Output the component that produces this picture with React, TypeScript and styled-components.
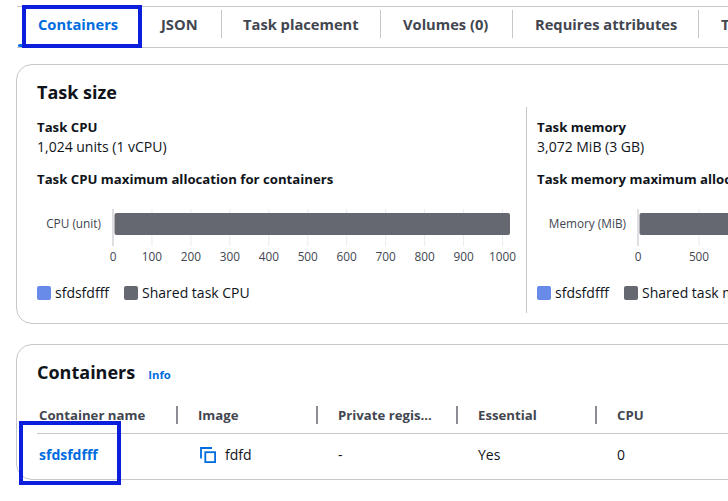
import styled, { createGlobalStyle } from "styled-components";

const GlobalStyle = createGlobalStyle`
  html, body {
    margin: 0;
    padding: 0;
    width: 728px;
    height: 501px;
    overflow: hidden;
    background: #fff;
  }
  body {
    font-family: "Open Sans", "Noto Sans", "Liberation Sans", sans-serif;
    color: #0f141a;
  }
`;

const Page = styled.div`
  position: relative;
  width: 1200px;
  height: 501px;
  padding: 6px 0 0 16px;
  box-sizing: border-box;
`;

const TabBar = styled.div`
  display: flex;
  align-items: center;
  height: 42px;
  box-sizing: border-box;
  border-top: 1px solid #c6c6cd;
  border-bottom: 1px solid #c6c6cd;
  margin-left: 1px;
  margin-bottom: 16px;
`;

const Tab = styled.div<{ $active?: boolean; $plain?: boolean; $width: number; $pad?: number }>`
  flex: none;
  width: ${(p) => p.$width}px;
  height: 28px;
  margin-top: -6px;
  box-sizing: border-box;
  padding-left: ${(p) => p.$pad ?? 22}px;
  border-left: ${(p) => (p.$plain ? "none" : "1px solid #c6c6cd")};
  font-size: 14.7px;
  font-weight: 700;
  line-height: 28px;
  white-space: nowrap;
  color: ${(p) => (p.$active ? "#006ce0" : "#424650")};
`;

const Card = styled.section<{ $height: number }>`
  width: 1150px;
  height: ${(p) => p.$height}px;
  box-sizing: border-box;
  border: 1px solid #c6c6cd;
  border-radius: 16px;
  margin-bottom: 20px;
  padding: 14px 20px 0;
  overflow: hidden;
`;

const CardTitle = styled.h2`
  margin: 0;
  font-size: 18px;
  font-weight: 700;
  line-height: 26px;
  display: flex;
  align-items: baseline;
  gap: 13px;
`;

const InfoLink = styled.span`
  font-size: 11.3px;
  font-weight: 700;
  color: #006ce0;
`;

const SizeColumns = styled.div`
  display: flex;
  margin-top: 2px;
  height: 206px;
`;

const SizeColumn = styled.div`
  flex: none;
  width: 500px;
  & + & {
    border-left: 1px solid #c6c6cd;
    padding-left: 10px;
    margin-left: -11px;
  }
`;

const FieldLabel = styled.div`
  font-size: 13.2px;
  font-weight: 700;
  line-height: 20px;
  margin-top: 10px;
`;

const FieldValue = styled.div`
  font-size: 14px;
  line-height: 20px;
`;

const AllocationLabel = styled(FieldLabel)`
  margin-top: 12px;
`;

const Chart = styled.svg`
  display: block;
  margin-top: 18px;
  overflow: visible;
  text {
    font-family: "Open Sans", "Noto Sans", sans-serif;
    font-size: 11.8px;
    fill: #424650;
  }
`;

const Legend = styled.div`
  display: flex;
  align-items: center;
  gap: 15px;
  margin-top: 17px;
  font-size: 14px;
  line-height: 18px;
  white-space: nowrap;
`;

const LegendItem = styled.div`
  display: flex;
  align-items: center;
  gap: 4px;
`;

const Swatch = styled.span<{ $color: string }>`
  width: 14px;
  height: 14px;
  border-radius: 2px;
  background: ${(p) => p.$color};
`;

const Table = styled.div`
  margin-top: 12px;
`;

const Row = styled.div<{ $head?: boolean }>`
  display: grid;
  grid-template-columns: 140px 140px 140px 139px 140px;
  align-items: center;
  height: ${(p) => (p.$head ? 34 : 41)}px;
  box-sizing: border-box;
  border-bottom: ${(p) => (p.$head ? "1px solid #c6c6cd" : "none")};
  font-size: ${(p) => (p.$head ? 13.2 : 14)}px;
  font-weight: ${(p) => (p.$head ? 700 : 400)};
  color: ${(p) => (p.$head ? "#424650" : "#0f141a")};
  white-space: nowrap;
`;

const HeadCell = styled.div<{ $first?: boolean }>`
  height: 18px;
  line-height: 18px;
  margin-bottom: 3px;
  padding-left: ${(p) => (p.$first ? 2 : 20)}px;
  margin-left: ${(p) => (p.$first ? 0 : -1)}px;
  border-left: ${(p) => (p.$first ? "none" : "2px solid #8c8c94")};
`;

const BodyCell = styled.div<{ $first?: boolean }>`
  display: flex;
  align-items: center;
  gap: 9px;
  padding-left: ${(p) => (p.$first ? 2 : 21)}px;
`;

const NameLink = styled.span`
  color: #006ce0;
  font-weight: 700;
`;

const ImageIcon = styled.svg`
  flex: none;
  margin-left: 2px;
`;

const Highlight = styled.div<{ $left: number; $top: number; $width: number; $height: number }>`
  position: absolute;
  left: ${(p) => p.$left}px;
  top: ${(p) => p.$top}px;
  width: ${(p) => p.$width}px;
  height: ${(p) => p.$height}px;
  box-sizing: border-box;
  border: 4px solid #0a1edb;
`;

const ActiveMark = styled.div`
  position: absolute;
  left: 18px;
  top: 44px;
  width: 8px;
  height: 3px;
  border-radius: 2px;
  background: #006ce0;
`;

const BarChart = ({ label, ticks, step, barEnd, axis }: { label: string; ticks: number[]; step: number; barEnd: number; axis: number }) => (
  <Chart width={480} height={60} viewBox="0 0 480 60">
    <text x={axis - 12} y={21} textAnchor="end">{label}</text>
    {ticks.map((t, i) => (
      <g key={t}>
        <line
          x1={axis + i * step}
          x2={axis + i * step}
          y1={2}
          y2={39}
          stroke={i === 0 ? "#dedee3" : "#ebebf0"}
          strokeWidth={i === 0 ? 2 : 1}
        />
        <text x={axis + i * step} y={54} textAnchor="middle">{t}</text>
      </g>
    ))}
    <rect x={axis + 1.5} y={6} width={barEnd - axis - 1.5} height={22} rx={2} fill="#656871" />
  </Chart>
);

export default function App() {
  return (
    <>
      <GlobalStyle />
      <Page>
        <TabBar>
          <Tab $active $plain $pad={21} $width={122}>Containers</Tab>
          <Tab $plain $width={82}>JSON</Tab>
          <Tab $pad={21} $width={159}>Task placement</Tab>
          <Tab $width={132}>Volumes (0)</Tab>
          <Tab $width={186}>Requires attributes</Tab>
          <Tab $width={120}>Tags</Tab>
        </TabBar>

        <Card $height={260}>
          <CardTitle>Task size</CardTitle>
          <SizeColumns>
            <SizeColumn>
              <FieldLabel>Task CPU</FieldLabel>
              <FieldValue>1,024 units (1 vCPU)</FieldValue>
              <AllocationLabel>Task CPU maximum allocation for containers</AllocationLabel>
              <BarChart label="CPU (unit)" ticks={[0, 100, 200, 300, 400, 500, 600, 700, 800, 900, 1000]} step={38.95} barEnd={473} axis={76} />
              <Legend>
                <LegendItem><Swatch $color="#688ae8" />sfdsfdfff</LegendItem>
                <LegendItem><Swatch $color="#656871" />Shared task CPU</LegendItem>
              </Legend>
            </SizeColumn>
            <SizeColumn>
              <FieldLabel>Task memory</FieldLabel>
              <FieldValue>3,072 MiB (3 GB)</FieldValue>
              <AllocationLabel>Task memory maximum allocation for containers</AllocationLabel>
              <BarChart label="Memory (MiB)" ticks={[0, 500, 1000, 1500, 2000, 2500, 3000]} step={61} barEnd={480} axis={101} />
              <Legend>
                <LegendItem><Swatch $color="#688ae8" />sfdsfdfff</LegendItem>
                <LegendItem><Swatch $color="#656871" />Shared task memory</LegendItem>
              </Legend>
            </SizeColumn>
          </SizeColumns>
        </Card>

        <Card $height={136}>
          <CardTitle>Containers<InfoLink>Info</InfoLink></CardTitle>
          <Table>
            <Row $head>
              <HeadCell $first>Container name</HeadCell>
              <HeadCell>Image</HeadCell>
              <HeadCell>Private regis...</HeadCell>
              <HeadCell>Essential</HeadCell>
              <HeadCell>CPU</HeadCell>
            </Row>
            <Row>
              <BodyCell $first><NameLink>sfdsfdfff</NameLink></BodyCell>
              <BodyCell>
                <ImageIcon width="16" height="16" viewBox="0 0 16 16" fill="none" stroke="#006ce0" strokeWidth="1.8">
                  <path d="M1 11.5V1h11" />
                  <rect x="5.3" y="5.2" width="9.8" height="9.9" />
                </ImageIcon>
                fdfd
              </BodyCell>
              <BodyCell>-</BodyCell>
              <BodyCell>Yes</BodyCell>
              <BodyCell>0</BodyCell>
            </Row>
          </Table>
        </Card>

        <ActiveMark />
        <Highlight $left={22} $top={5} $width={120} $height={43} />
        <Highlight $left={19} $top={421} $width={102} $height={64} />
      </Page>
    </>
  );
}
